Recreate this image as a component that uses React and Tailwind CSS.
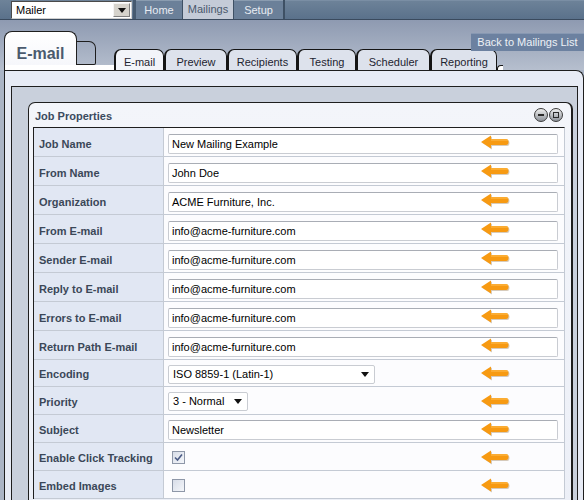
import React from "react";

const rows = [
  { label: "Job Name", type: "text", value: "New Mailing Example", h: "h-[29px]" },
  { label: "From Name", type: "text", value: "John Doe", h: "h-[29px]" },
  { label: "Organization", type: "text", value: "ACME Furniture, Inc.", h: "h-[29px]" },
  { label: "From E-mail", type: "text", value: "info@acme-furniture.com", h: "h-[29px]" },
  { label: "Sender E-mail", type: "text", value: "info@acme-furniture.com", h: "h-[29px]" },
  { label: "Reply to E-mail", type: "text", value: "info@acme-furniture.com", h: "h-[29px]" },
  { label: "Errors to E-mail", type: "text", value: "info@acme-furniture.com", h: "h-[29px]" },
  { label: "Return Path E-mail", type: "text", value: "info@acme-furniture.com", h: "h-[29px]" },
  { label: "Encoding", type: "select", value: "ISO 8859-1 (Latin-1)", w: "w-[207px]", h: "h-[27px]" },
  { label: "Priority", type: "select", value: "3 - Normal", w: "w-[80px]", h: "h-[28px]" },
  { label: "Subject", type: "text", value: "Newsletter", h: "h-[28px]", pt: "pt-[5px]" },
  { label: "Enable Click Tracking", type: "check", checked: true, h: "h-[28px]" },
  { label: "Embed Images", type: "check", checked: false, h: "h-[28px]" },
];

function Arrow() {
  return (
    <svg width="30" height="16" viewBox="0 0 30 16" className="absolute left-[317px] top-1/2 -translate-y-1/2 mt-[1px]">
      <path d="M1.5 8 L11 1.5 L11 5 L26 5 Q28.5 5 28.5 8 Q28.5 11 26 11 L11 11 L11 14.5 Z" fill="rgba(110,70,10,0.28)" />
      <path d="M0 7 L10 0.5 L10 4 L25 4 Q27.5 4 27.5 7 Q27.5 10 25 10 L10 10 L10 13.5 Z" fill="#f79a12" />
      <path d="M10 4 L25 4 Q27.2 4 27.4 6 L10 6 Z" fill="#ffbb4d" opacity="0.55" />
    </svg>
  );
}

function SelectArrow() {
  return (
    <svg width="8" height="5" viewBox="0 0 8 5">
      <path d="M0 0 L8 0 L4 5 Z" fill="#111" />
    </svg>
  );
}

function Row({ r }) {
  const pt = r.pt || "pt-[6px]";
  return (
    <div className={`flex ${r.h} border-b border-[#c4cad4]`}>
      <div
        className={`w-[130px] shrink-0 bg-[#e1e7f3] border-r border-[#c4cad4] pl-[5px] flex ${
          r.type === "text" ? `items-start ${pt}` : "items-center pt-[2px]"
        }`}
      >
        <span className="text-[11px] leading-[20px] font-bold text-[#3b4758] whitespace-nowrap">{r.label}</span>
      </div>
      <div
        className={`relative flex-1 bg-[#fcfcfe] flex pl-[4px] pr-[6px] ${
          r.type === "text" ? `items-start ${pt}` : "items-center pt-[2px]"
        }`}
      >
        {r.type === "text" && (
          <div className="h-[20px] flex-1 border border-[#c9ccd2] border-t-[#a9adb5] rounded-[2px] bg-white pl-[3px] text-[11px] leading-[18px] text-black">
            {r.value}
          </div>
        )}
        {r.type === "select" && (
          <div
            className={`${r.w} h-[19px] border border-[#c9ccd2] rounded-[2px] bg-white pl-[4px] pr-[5px] flex items-center justify-between text-[11px] text-black`}
          >
            <span>{r.value}</span>
            <SelectArrow />
          </div>
        )}
        {r.type === "check" && (
          <div className="ml-[4px] w-[13px] h-[13px] border border-[#8e97a8] bg-gradient-to-br from-[#d8dde8] to-[#f4f6fa] flex items-center justify-center">
            {r.checked && (
              <svg width="9" height="9" viewBox="0 0 9 9">
                <path d="M1 4.5 L3.5 7 L8 1.5" stroke="#4b5b85" strokeWidth="1.6" fill="none" />
              </svg>
            )}
          </div>
        )}
        <Arrow />
      </div>
    </div>
  );
}

function CircleBtn({ kind }) {
  return (
    <div className="w-[14px] h-[14px] rounded-full border border-[#3a3a3a] bg-gradient-to-b from-[#f0f0f0] to-[#8e939a] flex items-center justify-center">
      {kind === "min" ? (
        <div className="w-[6px] h-[2px] bg-[#2a2a2a]" />
      ) : (
        <div className="w-[6px] h-[6px] border-[1.5px] border-[#2a2a2a]" />
      )}
    </div>
  );
}

const subTabs = [
  { t: "E-mail", w: "w-[50px]", active: true },
  { t: "Preview", w: "w-[63px]" },
  { t: "Recipients", w: "w-[70px]" },
  { t: "Testing", w: "w-[59px]" },
  { t: "Scheduler", w: "w-[74px]" },
  { t: "Reporting", w: "w-[67px]" },
];

export default function App() {
  return (
    <div className="w-[584px] h-[500px] overflow-hidden font-['Liberation_Sans',Arial,sans-serif] bg-[#aab4c5]">
      {/* Top bar */}
      <div className="h-[20px] flex bg-gradient-to-b from-[#6e8399] to-[#5a718b] border-b border-[#3a4a5e]">
        <div className="w-[11px]" />
        <div className="mt-[1px] w-[121px] h-[18px] bg-white border border-[#4a4a4a] border-r-[#d0d0d0] border-b-[#d0d0d0] flex items-center justify-between pl-[4px] pr-[1px]">
          <span className="text-[11px] text-black">Mailer</span>
          <div className="w-[17px] h-[14px] bg-[#d6d3cc] border border-[#f4f4f4] border-r-[#808080] border-b-[#808080] flex items-center justify-center">
            <SelectArrow />
          </div>
        </div>
        <div className="w-[3px] bg-[#465a70] ml-[1px]" />
        <div className="w-[46px] flex items-center justify-center bg-[#6b8099] border-t border-[#8a9cb0] text-[11px] text-[#e8ecf2]">Home</div>
        <div className="w-[1px] bg-[#3e5064]" />
        <div className="w-[50px] flex items-center justify-center bg-[#c4cbd7] text-[11px] text-[#4a586c]">Mailings</div>
        <div className="w-[1px] bg-[#3e5064]" />
        <div className="w-[49px] flex items-center justify-center bg-[#6b8099] border-t border-[#8a9cb0] text-[11px] text-[#e8ecf2]">Setup</div>
        <div className="w-[2px] bg-[#3e5064]" />
        <div className="flex-1 border-t border-[#7a8ea4]" />
      </div>

      {/* Tab area */}
      <div className="relative h-[50px] flex items-end bg-gradient-to-b from-[#8e9ab1] to-[#b6bfce]">
        <div className="ml-[4px] w-[110px] flex flex-col">
          <div className="flex items-end">
            <div className="w-[73px] h-[34px] bg-gradient-to-b from-white to-[#f6f7fb] border border-b-0 border-[#1e1e1e] rounded-t-[8px] flex items-center justify-center pt-[10px]">
              <span className="text-[16px] font-bold text-[#4b5a6e]">E-mail</span>
            </div>
            <div className="w-[19px] h-[24px] border border-l-0 border-[#1e1e1e] rounded-tr-[7px] rounded-br-[2px]" />
          </div>
          <div className="h-[5px] bg-white border-l border-[#1e1e1e]" />
        </div>
        <div className="flex items-end">
          {subTabs.map((s) => (
            <div
              key={s.t}
              className={`${s.w} h-[21px] border-l-2 border-r border-t border-[#151515] rounded-t-[7px] flex items-center justify-center text-[11px] text-[#1e2430] pt-[5px] ${
                s.active ? "bg-[#f2f4f9]" : "bg-[#dde2ec]"
              }`}
            >
              {s.t}
            </div>
          ))}
          <div className="w-[6px] h-[5px] bg-white border-l border-t border-[#151515] rounded-tl-[4px]" />
        </div>
        <div className="absolute left-[471px] top-[13px] w-[113px] h-[18px] bg-[#6c81a0] border-t border-[#8798b2] flex items-center justify-center text-[11px] text-[#eef1f6]">
          Back to Mailings List
        </div>
      </div>

      {/* Panel */}
      <div className="ml-[4px] h-[430px] bg-[#e7ebf5] border-l border-t border-r border-[#1e1e1e] rounded-tr-[8px] pt-[15px] pl-[6px] pr-[5px]">
        <div className="h-[420px] bg-[#c9d0dc] border-l border-t border-r border-[#1e1e1e] pt-[15px] pl-[16px] pr-[4px]">
          <div className="h-[420px] bg-gradient-to-b from-[#f3f5fa] to-[#eceff7] border-l border-t border-[#1e1e1e] border-r-2 rounded-t-[7px] pl-[4px] pr-[6px]">
            <div className="h-[24px] flex items-center justify-between pl-[2px] pr-[2px] pt-[2px]">
              <span className="text-[11px] font-bold text-[#3b4a5e]">Job Properties</span>
              <div className="flex gap-[1px] -mt-[2px]">
                <CircleBtn kind="min" />
                <CircleBtn kind="max" />
              </div>
            </div>
            <div className="border-l border-t border-[#1e1e1e] border-r border-r-[#c4cad4]">
              {rows.map((r) => (
                <Row key={r.label} r={r} />
              ))}
            </div>
          </div>
        </div>
      </div>
    </div>
  );
}
